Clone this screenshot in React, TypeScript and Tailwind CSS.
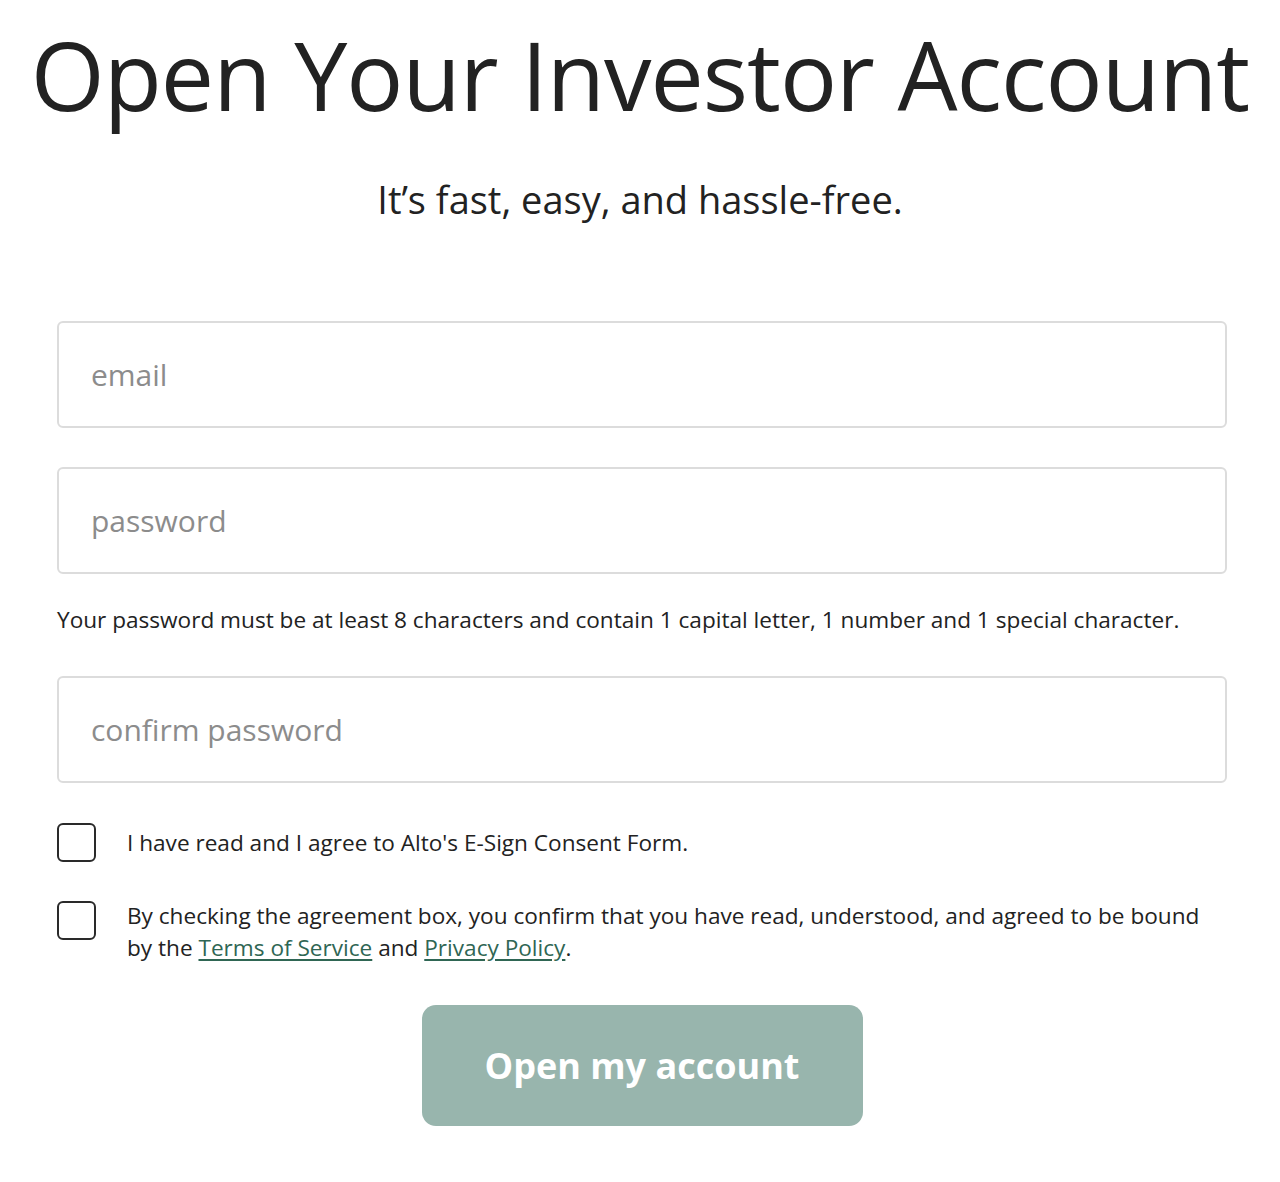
import { useState } from 'react';

const font = { fontFamily: '"Open Sans", "Liberation Sans", sans-serif' };

function Field({ placeholder, type }: { placeholder: string; type: string }) {
  return (
    <input
      type={type}
      placeholder={placeholder}
      className="h-[107px] w-full rounded-[6px] border-2 border-[#dcdcdc] bg-white px-[32px] text-[30px] text-[#222] outline-none placeholder:text-[#8c8c8c]"
    />
  );
}

function Box({ checked, onChange }: { checked: boolean; onChange: () => void }) {
  return (
    <button
      type="button"
      onClick={onChange}
      className="h-[39px] w-[39px] shrink-0 rounded-[6px] border-2 border-[#2a2a2a] bg-white"
    >
      {checked ? '✓' : null}
    </button>
  );
}

export default function App() {
  const [esign, setEsign] = useState(false);
  const [terms, setTerms] = useState(false);

  return (
    <div className="min-h-screen bg-white text-[#222]" style={font}>
      <h1 className="pt-[14px] text-center text-[95px] leading-[120px] tracking-[-1px]">
        Open Your Investor Account
      </h1>
      <p className="mt-[39px] text-center text-[38px] leading-[52px]">
        It’s fast, easy, and hassle-free.
      </p>

      <form className="ml-[57px] mr-[53px] mt-[96px] flex flex-col">
        <Field placeholder="email" type="email" />
        <div className="mt-[39px]">
          <Field placeholder="password" type="password" />
        </div>
        <p className="mt-[31px] text-[22.6px] leading-[30px]">
          Your password must be at least 8 characters and contain 1 capital letter, 1 number and 1 special character.
        </p>
        <div className="mt-[41px]">
          <Field placeholder="confirm password" type="password" />
        </div>

        <div className="mt-[40px] flex items-center gap-[31px]">
          <Box checked={esign} onChange={() => setEsign(!esign)} />
          <span className="text-[22.6px] leading-[32px]">I have read and I agree to Alto's E-Sign Consent Form.</span>
        </div>

        <div className="mt-[39px] flex items-start gap-[31px]">
          <Box checked={terms} onChange={() => setTerms(!terms)} />
          <span className="-mt-[1px] max-w-[1095px] text-[22.6px] leading-[32px]">
            By checking the agreement box, you confirm that you have read, understood, and agreed to be bound by the{' '}
            <a href="#" className="text-[#2f6654] underline underline-offset-[3px]">Terms of Service</a> and{' '}
            <a href="#" className="text-[#2f6654] underline underline-offset-[3px]">Privacy Policy</a>.
          </span>
        </div>

        <div className="mt-[41px] flex justify-center">
          <button
            type="button"
            className="h-[121px] w-[441px] rounded-[14px] bg-[#98b5ad] text-[36px] font-bold text-white"
          >
            Open my account
          </button>
        </div>
      </form>
    </div>
  );
}
